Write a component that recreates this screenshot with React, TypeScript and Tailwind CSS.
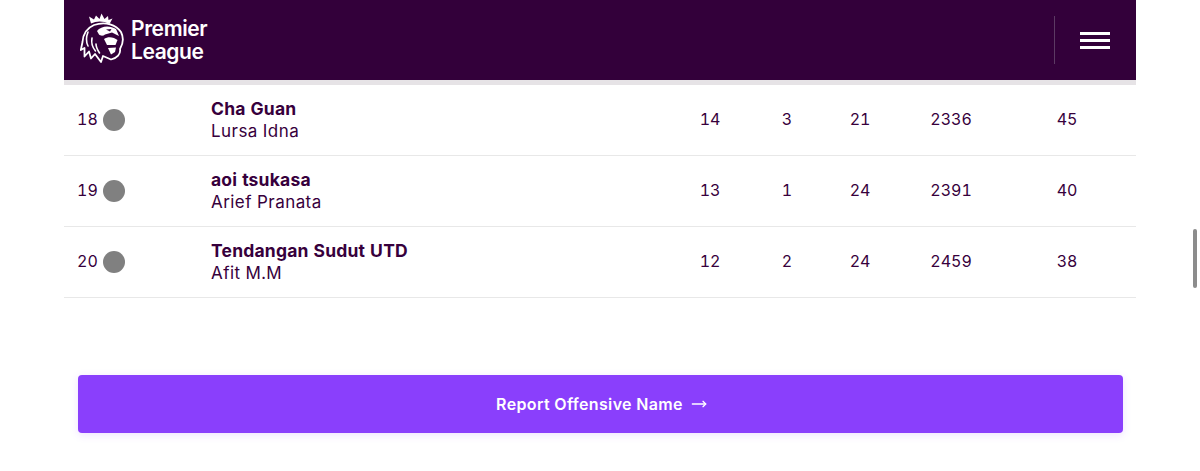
import React from "react";
import { MoveRight } from "lucide-react";

const rows = [
  { rank: 18, team: "Cha Guan", manager: "Lursa Idna", stats: [14, 3, 21, 2336, 45] },
  { rank: 19, team: "aoi tsukasa", manager: "Arief Pranata", stats: [13, 1, 24, 2391, 40] },
  { rank: 20, team: "Tendangan Sudut UTD", manager: "Afit M.M", stats: [12, 2, 24, 2459, 38] },
];

function Lion() {
  return (
    <svg width="45" height="50" viewBox="0 0 45 50" fill="none" className="-mt-[5px] shrink-0">
      {/* crown */}
      <path d="M11 10.5 L9 3.5 L14 6.5 L16 2.5 L19.5 6 L21.5 0.5 L24.5 6 L28 3 L28.5 7 L32.5 5.5 L29.5 11 Q20 6.5 11 10.5Z" fill="#fff" />
      {/* mane */}
      <path
        d="M14 12 C7 15 3 21 2.5 29 L0.8 37 L4.5 35 L4.5 43.5 L9 38.5 L11 45.5 L15 41 L21 49 L23 43 L31 46.5 C37 45 41 41 40 36 C43 31 44 25 41 19 C36 12 26 8 14 12Z"
        stroke="#fff"
        strokeWidth="1.8"
        strokeLinejoin="round"
      />
      <path d="M8 19 C6 24 6 29 8 33 M12 25 C11 30 13 35 15.5 38 M16 31 C16 34 17.5 37 19.5 40" stroke="#fff" strokeWidth="1.6" strokeLinecap="round" />
      {/* brow and eye */}
      <path d="M17 18 C21 12.5 30 12 36 16 L39 23 L32 19.5 L25 21.5 C23 23.5 20 22.5 19 21.5 Z" fill="#fff" />
      <path d="M26 16.5 L31.5 16 L30 18.5 Z" fill="#33003a" />
      {/* muzzle */}
      <path d="M24 26 C28 23 34 24 37.5 27 L35.5 32 L27 32 Z" fill="#fff" />
      <path d="M28 35 L36 34.5 L35 39 L31 41.5 Z" fill="#fff" />
    </svg>
  );
}

export default function App() {
  return (
    <div className="relative h-[471px] w-[1200px] overflow-hidden bg-white text-[#37003c] font-['Inter','Noto_Sans',sans-serif]">
      <div className="mx-auto w-[1072px]">
        <header className="flex h-[85px] items-stretch border-b-[5px] border-[#e6e3e6] bg-[#33003a]">
          <div className="flex items-center pl-[16px]">
            <Lion />
            <div className="ml-[6px] flex flex-col text-[21px] font-semibold leading-[23px] tracking-[-0.4px] text-white">
              <span>Premier</span>
              <span>League</span>
            </div>
          </div>
          <div className="ml-auto flex items-center">
            <div className="h-[48px] w-px bg-[#5c3a63]" />
            <div className="ml-[25px] mr-[26px] flex w-[30px] flex-col gap-[4px]">
              <span className="h-[3px] bg-white" />
              <span className="h-[3px] bg-white" />
              <span className="h-[3px] bg-white" />
            </div>
          </div>
        </header>

        <div>
          {rows.map((row) => (
            <div
              key={row.rank}
              className="grid h-[71px] grid-cols-[147px_461px_76px_78px_68px_114px_118px] items-center border-b border-[#e8e8e8] text-[16px] tabular-nums"
            >
              <div className="flex items-center pl-[13px]">
                <span className="-mt-[2px] w-[26px]">{row.rank}</span>
                <span className="h-[22px] w-[22px] rounded-full bg-[#808080]" />
              </div>
              <div className="leading-[22px] -mt-[1px]">
                <div className="text-[17.5px] font-bold tracking-[0.2px]">{row.team}</div>
                <div className="text-[17px] tracking-[0.45px]">{row.manager}</div>
              </div>
              {row.stats.map((s, j) => (
                <div key={j} className="-mt-[2px] text-center">
                  {s}
                </div>
              ))}
            </div>
          ))}
        </div>

        <div className="mt-[77px] px-[14px]">
          <button className="flex h-[58px] w-[1045px] items-center justify-center gap-[8px] rounded-[4px] bg-[#8a3ffc] pl-[2px] text-[16px] font-semibold tracking-[0.35px] text-white shadow-[0_2px_8px_rgba(138,63,252,0.15)]">
            Report Offensive Name
            <MoveRight size={16} strokeWidth={2} />
          </button>
        </div>
      </div>

      {/* overlay scrollbar */}
      <div className="absolute left-[1193px] top-[229px] h-[59px] w-[4px] rounded-full bg-[#8c8c8c]" />
    </div>
  );
}
